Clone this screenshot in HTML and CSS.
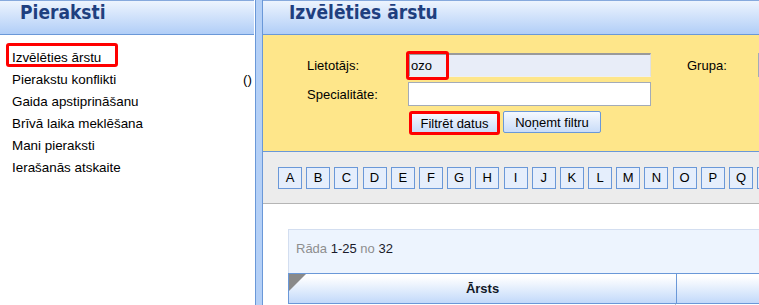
FILE: index.html
```html
<!DOCTYPE html>
<html lang="lv">
<head>
    <meta charset="UTF-8">
    <title>Pieraksti - Izvēlēties ārstu</title>
    <link rel="stylesheet" href="styles.css">
</head>
<body>
    <div class="app">
        <aside class="side">
            <div class="head">Pieraksti</div>
            <ul class="menu">
                <li><span class="mark"></span>Izvēlēties ārstu</li>
                <li><span>Pierakstu konflikti</span><span>()</span></li>
                <li>Gaida apstiprināšanu</li>
                <li>Brīvā laika meklēšana</li>
                <li>Mani pieraksti</li>
                <li>Ierašanās atskaite</li>
            </ul>
        </aside>

        <div class="split"></div>

        <main class="main">
            <div class="head">Izvēlēties ārstu</div>

            <!-- filtrs -->
            <div class="filter">
                <label>Lietotājs:</label>
                <div class="field">
                    <input class="inp focus" value="ozo">
                    <span class="mark"></span>
                </div>
                <span></span>
                <label>Grupa:</label>
                <input class="inp small">

                <label>Specialitāte:</label>
                <input class="inp">
                <span></span><span></span><span></span>

                <span></span>
                <div class="btns">
                    <button class="btn hit">Filtrēt datus</button>
                    <button class="btn wide">Noņemt filtru</button>
                </div>
            </div>

            <div class="letters" id="letters"></div>

            <div class="results">
                <div class="pager"><span class="dim">Rāda</span> 1-25 <span class="dim">no</span> 32</div>
                <div class="thead">
                    <div class="th first"><span class="corner"></span>Ārsts</div>
                    <div class="th second"></div>
                </div>
                <div class="trow">
                    <div class="td first"></div>
                    <div class="td"></div>
                </div>
            </div>
        </main>
    </div>

    <script>
        // alfabēta pogas
        const box = document.getElementById('letters');
        'ABCDEFGHIJKLMNOPQR'.split('').forEach(ch => {
            const a = document.createElement('a');
            a.href = '#';
            a.textContent = ch;
            box.appendChild(a);
        });
    </script>
</body>
</html>
```

FILE: styles.css
```css
:root {
    --blue-line: #6a98d8;
    --title: #1f3f7f;
}

body {
    margin: 0;
    font: 13px "Liberation Sans", Arial, sans-serif;
    color: #000;
    background: #fff;
}

.app {
    display: flex;
    height: 305px;
    overflow: hidden;
}

.side {
    width: 254px;
    flex: none;
}

.split {
    width: 6px;
    margin-left: 1px;
    flex: none;
    background: #b4d0f7;
    border-left: 1px solid var(--blue-line);
    border-right: 1px solid var(--blue-line);
}

.main {
    flex: 1;
    min-width: 0;
    overflow: hidden;
}

.head {
    height: 33px;
    line-height: 33px;
    padding-left: 20px;
    border-top: 1px solid #86a9dd;
    border-bottom: 1px solid var(--blue-line);
    background: linear-gradient(#edf4fe, #b1cef7);
    font: bold 19px "DejaVu Sans Condensed", "DejaVu Sans", sans-serif;
    font-stretch: condensed;
    color: var(--title);
    white-space: nowrap;
}

.main .head {
    padding-left: 26px;
}

.menu {
    list-style: none;
    margin: 0;
    padding: 12px 2px 0 12px;
    line-height: 22px;
    font-size: 13.4px;
}

.menu li {
    position: relative;
    display: flex;
    justify-content: space-between;
    white-space: nowrap;
}

.mark {
    position: absolute;
    box-sizing: border-box;
    border: 3px solid #f00;
    border-radius: 3px;
    pointer-events: none;
}

.menu .mark {
    left: -6px;
    top: -4px;
    width: 112px;
    height: 24px;
}

.filter {
    height: 98px;
    padding: 18px 0 0 44px;
    background: #fee68a;
    border-bottom: 1px solid var(--blue-line);
    display: grid;
    grid-template-columns: 101px 243px 36px 71px 160px;
    grid-template-rows: 24px 24px 24px;
    row-gap: 5px;
    align-items: center;
}

.field {
    position: relative;
    height: 24px;
}

.field .mark {
    left: -2px;
    top: -2px;
    width: 43px;
    height: 29px;
}

.inp {
    box-sizing: border-box;
    width: 243px;
    height: 24px;
    margin: 0;
    padding: 0 2px;
    border: 1px solid #a3abb8;
    background: #fff;
    font: inherit;
    color: #000;
}

.inp.focus {
    background: #e8edf8;
    border-top: 2px solid #9a9a9a;
    border-left: 2px solid #9a9a9a;
    border-right: 1px solid #e0e0e0;
    border-bottom: 1px solid #f0f0f0;
    padding-left: 1px;
}

.inp.small {
    width: 160px;
}

.btns {
    grid-column: 2 / span 4;
    align-self: start;
    display: flex;
    gap: 3px;
    align-items: flex-start;
}

.btn {
    box-sizing: border-box;
    height: 22px;
    padding: 0;
    border: 1px solid var(--blue-line);
    border-radius: 2px;
    background: linear-gradient(#f5f9ff, #c9dcf8);
    font: inherit;
    color: #000;
    text-align: center;
}

.btn.hit {
    width: 91px;
    height: 24px;
    margin-left: 1px;
    border: 3px solid #f00;
    border-radius: 3px;
}

.btn.wide {
    width: 98px;
}

.letters {
    height: 36px;
    padding: 15px 0 0 15px;
    background: #ececec;
    border-bottom: 1px solid #b5b5b5;
    display: flex;
    gap: 4.2px;
    white-space: nowrap;
}

.letters a {
    flex: none;
    box-sizing: border-box;
    width: 24px;
    height: 22px;
    line-height: 20px;
    border: 1px solid var(--blue-line);
    background: #e5eefc;
    color: #000;
    text-align: center;
    text-decoration: none;
}

.results {
    padding: 25px 0 0 25px;
}

.pager {
    height: 43px;
    line-height: 38px;
    padding-left: 7px;
    background: #edf4fe;
    border-top: 1px solid #d3def0;
    border-left: 1px solid #d3def0;
    color: #1a1a2a;
    white-space: nowrap;
}

.pager .dim {
    color: #8e8e8e;
}

.thead {
    display: flex;
    height: 29px;
    border: 1px solid var(--blue-line);
    border-right: none;
    background: linear-gradient(#fff 10%, #c2d9fa);
    font-weight: bold;
    color: #111827;
}

.th {
    position: relative;
    flex: none;
    line-height: 29px;
    text-align: center;
}

.th.first,
.td.first {
    width: 387px;
    border-right: 1px solid var(--blue-line);
}

.th.second {
    width: 300px;
}

.corner {
    position: absolute;
    left: 0;
    top: 0;
    border-top: 17px solid #8a8a8a;
    border-right: 17px solid transparent;
}

.trow {
    display: flex;
    height: 20px;
}

.td.first {
    border-right-color: #c4c4c4;
}
```
